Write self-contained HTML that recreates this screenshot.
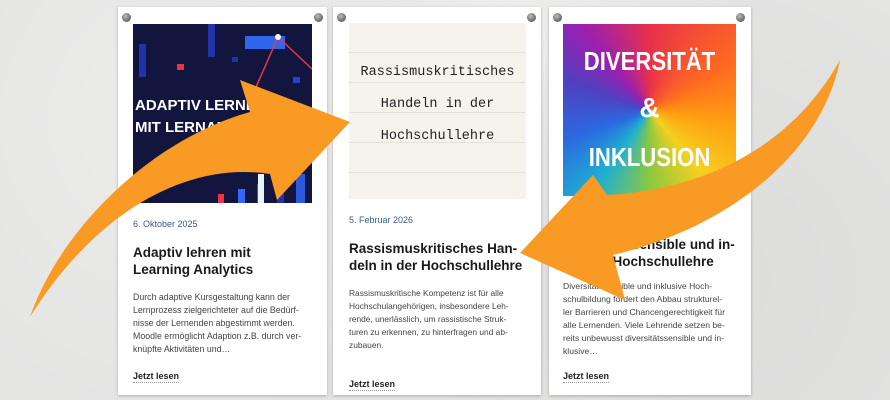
<!DOCTYPE html>
<html><head><meta charset="utf-8"><style>
*{margin:0;padding:0;box-sizing:border-box}
body{width:890px;height:400px;overflow:hidden;position:relative;font-family:"Liberation Sans",sans-serif;
background:#e4e4e3;background-image:radial-gradient(circle at 20% 30%,#ececeb 0,transparent 40%),radial-gradient(circle at 80% 70%,#dcdcdb 0,transparent 45%),radial-gradient(circle at 60% 10%,#efefee 0,transparent 35%);}
.card{position:absolute;top:7px;height:388px;background:#fff;box-shadow:0 1px 3px rgba(0,0,0,.25)}
.pin{position:absolute;top:6px;width:9px;height:9px;border-radius:50%;background:radial-gradient(circle at 40% 35%,#bbb,#666 70%)}
.img{position:absolute;overflow:hidden}
.date{position:absolute;font-size:9px;color:#3a5a8a}
.title{position:absolute;font-size:13.5px;font-weight:bold;color:#1a1a1a;line-height:17px;white-space:nowrap}
.body{position:absolute;font-size:8.8px;color:#444;line-height:13px;white-space:nowrap}
.more{position:absolute;font-size:9px;font-weight:bold;color:#222;border-bottom:1px dotted #999;padding-bottom:1px}
.nb{position:absolute;left:0;right:0;text-align:center;font-family:"Liberation Mono",monospace;font-size:13.5px;color:#222}
.dv{position:absolute;left:0;right:0;text-align:center;color:#fff;font-weight:bold;font-family:"Liberation Sans Narrow","Liberation Sans",sans-serif}
</style></head><body>

<div class="card" style="left:118px;width:209px">
 <div class="pin" style="left:4px"></div><div class="pin" style="left:196px"></div>
 <div class="img" style="left:15px;top:17px;width:179px;height:179px;background:#12163f">
  <svg width="179" height="179">
   <g fill="#2233aa"><rect x="6" y="20" width="7" height="33"/><rect x="75" y="0" width="7" height="33"/><rect x="99" y="33" width="6" height="5"/><rect x="160" y="53" width="7" height="6" fill="#2a3fd0"/><rect x="144" y="130" width="7" height="49"/><rect x="124" y="160" width="7" height="19" fill="#3055ee"/><rect x="105" y="165" width="7" height="14" fill="#3366ff"/><rect x="163" y="150" width="9" height="29" fill="#2a5ae0"/></g>
   <rect x="112" y="12" width="40" height="13" fill="#2f66ee"/>
   <rect x="44" y="40" width="7" height="6" fill="#ee3344"/>
   <rect x="85" y="170" width="6" height="9" fill="#ee3344"/>
   <rect x="125" y="150" width="6" height="29" fill="#e6f4ff"/>
   <polyline points="120,70 145,13 179,45" fill="none" stroke="#ee3344" stroke-width="1.5"/>
   <circle cx="145" cy="13" r="3" fill="#fff"/>
   <text x="2" y="86" fill="#fff" font-size="15" font-weight="bold" font-family="Liberation Sans">ADAPTIV LERNEN</text>
   <text x="2" y="108" fill="#fff" font-size="15" font-weight="bold" font-family="Liberation Sans">MIT LERNANALYTICS</text>
  </svg>
 </div>
 <div class="date" style="left:15px;top:212px">6. Oktober 2025</div>
 <div class="title" style="left:15px;top:237px">Adaptiv lehren mit<br>Learning Analytics</div>
 <div class="body" style="left:15px;top:284px">Durch adaptive Kursgestaltung kann der<br>Lernprozess zielgerichteter auf die Bedürf-<br>nisse der Lernenden abgestimmt werden.<br>Moodle ermöglicht Adaption z.B. durch ver-<br>knüpfte Aktivitäten und…</div>
 <div class="more" style="left:15px;top:364px">Jetzt lesen</div>
</div>

<div class="card" style="left:333px;width:208px">
 <div class="pin" style="left:4px"></div><div class="pin" style="left:194px"></div>
 <div class="img" style="left:16px;top:16px;width:177px;height:176px;background:#f6f3ec;background-image:repeating-linear-gradient(to bottom,transparent 0,transparent 29px,#e6e2d9 29px,#e6e2d9 30px)">
  <div class="nb" style="top:42px">Rassismuskritisches</div>
  <div class="nb" style="top:74px">Handeln in der</div>
  <div class="nb" style="top:106px">Hochschullehre</div>
 </div>
 <div class="date" style="left:16px;top:208px">5. Februar 2026</div>
 <div class="title" style="left:16px;top:233px">Rassismuskritisches Han-<br>deln in der Hochschullehre</div>
 <div class="body" style="left:16px;top:280px;font-size:8.4px">Rassismuskritische Kompetenz ist für alle<br>Hochschulangehörigen, insbesondere Leh-<br>rende, unerlässlich, um rassistische Struk-<br>turen zu erkennen, zu hinterfragen und ab-<br>zubauen.</div>
 <div class="more" style="left:16px;top:372px">Jetzt lesen</div>
</div>

<div class="card" style="left:549px;width:202px">
 <div class="pin" style="left:4px"></div><div class="pin" style="left:187px"></div>
 <div class="img" style="left:14px;top:17px;width:173px;height:172px;background:conic-gradient(from 0deg at 50% 50%,#e8304a,#ff6a20 60deg,#ffa010 100deg,#f5d020 140deg,#8cc840 180deg,#20b0d0 215deg,#2a6ae0 250deg,#5040c0 290deg,#9a20b0 320deg,#e8304a 360deg)">
  <div class="dv" style="top:22px;font-size:26px;transform:scaleX(.85)">DIVERSITÄT</div>
  <div class="dv" style="top:68px;font-size:28px">&amp;</div>
  <div class="dv" style="top:118px;font-size:26px;transform:scaleX(.85)">INKLUSION</div>
 </div>
 <div class="date" style="left:14px;top:208px">1. Januar 2026</div>
 <div class="title" style="left:14px;top:229px">Diversitätssensible und in-<br>klusive Hochschullehre</div>
 <div class="body" style="left:14px;top:273px;font-size:8.6px">Diversitätssensible und inklusive Hoch-<br>schulbildung fördert den Abbau strukturel-<br>ler Barrieren und Chancengerechtigkeit für<br>alle Lernenden. Viele Lehrende setzen be-<br>reits unbewusst diversitätssensible und in-<br>klusive…</div>
 <div class="more" style="left:14px;top:364px">Jetzt lesen</div>
</div>

<svg width="890" height="400" style="position:absolute;left:0;top:0">
 <path d="M30,317 C60,230 150,140 250,112 L240,80 L350,122 L277,200 L270,174 C180,160 90,220 30,317 Z" fill="#f89a24"/>
 <path d="M840,60 C790,150 700,190 607,195 L593,175 L520,253 L625,300 L613,255 C720,230 820,160 840,60 Z" fill="#f89a24"/>
</svg>
</body></html>
